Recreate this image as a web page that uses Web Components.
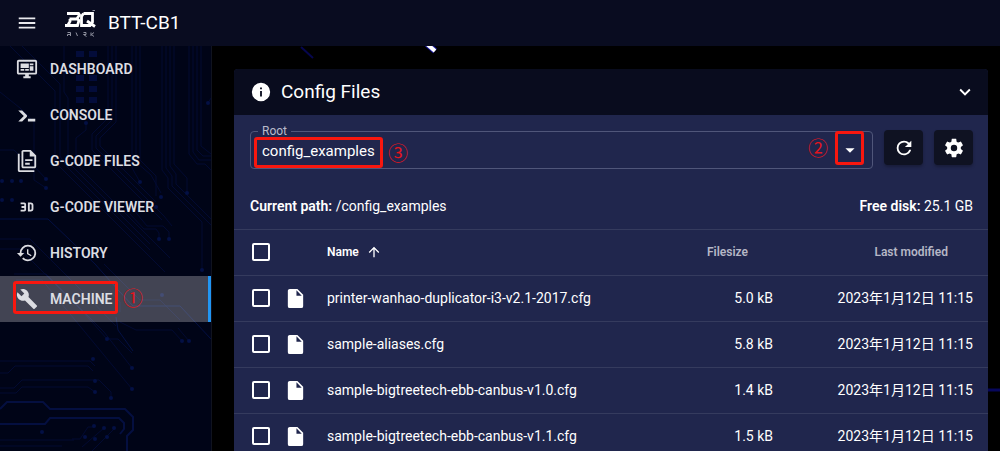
<!DOCTYPE html>
<html lang="en">
<head>
<meta charset="utf-8">
<meta name="viewport" content="width=device-width, initial-scale=1">
<title>BTT-CB1</title>
<style>
html, body { margin: 0; background: #000; }
body { font-family: Roboto, "Noto Sans CJK SC", sans-serif; font-size: 14px; line-height: 20px; color: #fff; overflow: hidden; }
</style>
</head>
<body>
<machine-app></machine-app>
<script>
const ICONS = {
  menu: 'M3,6H21V8H3V6M3,11H21V13H3V11M3,16H21V18H3V16Z',
  dashboard: 'M21,16V4H3V16H21M21,2A2,2 0 0,1 23,4V16A2,2 0 0,1 21,18H14V20H16V22H8V20H10V18H3C1.89,18 1,17.1 1,16V4C1,2.89 1.89,2 3,2H21M5,6H14V11H5V6M15,6H19V8H15V6M19,9V14H15V9H19M5,12H9V14H5V12M10,12H14V14H10V12Z',
  console: 'M13,19V16H21V19H13M8.5,13L2.47,7H6.71L11.67,11.95C12.25,12.54 12.25,13.5 11.67,14.07L6.74,19H2.5L8.5,13Z',
  files: 'M16 0H8C6.9 0 6 .9 6 2V18C6 19.1 6.9 20 8 20H20C21.1 20 22 19.1 22 18V6L16 0M20 18H8V2H15V7H20V18M4 4V22H20V24H4C2.9 24 2 23.1 2 22V4H4M10 10V12H18V10H10M10 14V16H15V14H10Z',
  viewer: 'M5,7H9A2,2 0 0,1 11,9V15A2,2 0 0,1 9,17H5V15H9V13H6V11H9V9H5V7M13,7H16A3,3 0 0,1 19,10V14A3,3 0 0,1 16,17H13V7M16,15A1,1 0 0,0 17,14V10A1,1 0 0,0 16,9H15V15H16Z',
  history: 'M13.5,8H12V13L16.28,15.54L17,14.33L13.5,12.25V8M13,3A9,9 0 0,0 4,12H1L4.96,16.03L9,12H6A7,7 0 0,1 13,5A7,7 0 0,1 20,12A7,7 0 0,1 13,19C11.07,19 9.32,18.21 8.06,16.94L6.64,18.36C8.27,20 10.5,21 13,21A9,9 0 0,0 22,12A9,9 0 0,0 13,3',
  wrench: 'M22.7,19L13.6,9.9C14.5,7.6 14,4.9 12.1,3C10.1,1 7.1,0.6 4.7,1.7L9,6L6,9L1.6,4.7C0.4,7.1 0.9,10.1 2.9,12.1C4.8,14 7.5,14.5 9.8,13.6L18.9,22.7C19.3,23.1 19.9,23.1 20.3,22.7L22.6,20.4C23.1,20 23.1,19.3 22.7,19Z',
  info: 'M13,9H11V7H13M13,17H11V11H13M12,2A10,10 0 0,0 2,12A10,10 0 0,0 12,22A10,10 0 0,0 22,12A10,10 0 0,0 12,2Z',
  chevron: 'M7.41,8.58L12,13.17L16.59,8.58L18,10L12,16L6,10L7.41,8.58Z',
  refresh: 'M17.65,6.35C16.2,4.9 14.21,4 12,4A8,8 0 0,0 4,12A8,8 0 0,0 12,20C15.73,20 18.84,17.45 19.73,14H17.65C16.83,16.33 14.61,18 12,18A6,6 0 0,1 6,12A6,6 0 0,1 12,6C13.66,6 15.14,6.69 16.22,7.78L13,11H20V4L17.65,6.35Z',
  cog: 'M12,15.5A3.5,3.5 0 0,1 8.5,12A3.5,3.5 0 0,1 12,8.5A3.5,3.5 0 0,1 15.5,12A3.5,3.5 0 0,1 12,15.5M19.43,12.97C19.47,12.65 19.5,12.33 19.5,12C19.5,11.67 19.47,11.34 19.43,11L21.54,9.37C21.73,9.22 21.78,8.95 21.66,8.73L19.66,5.27C19.54,5.05 19.27,4.96 19.05,5.05L16.56,6.05C16.04,5.66 15.5,5.32 14.87,5.07L14.5,2.42C14.46,2.18 14.25,2 14,2H10C9.75,2 9.54,2.18 9.5,2.42L9.13,5.07C8.5,5.32 7.96,5.66 7.44,6.05L4.95,5.05C4.73,4.96 4.46,5.05 4.34,5.27L2.34,8.73C2.21,8.95 2.27,9.22 2.46,9.37L4.57,11C4.53,11.34 4.5,11.67 4.5,12C4.5,12.33 4.53,12.65 4.57,12.97L2.46,14.63C2.27,14.78 2.21,15.05 2.34,15.27L4.34,18.73C4.46,18.95 4.73,19.03 4.95,18.95L7.44,17.94C7.96,18.34 8.5,18.68 9.13,18.93L9.5,21.58C9.54,21.82 9.75,22 10,22H14C14.25,22 14.46,21.82 14.5,21.58L14.87,18.93C15.5,18.67 16.04,18.34 16.56,17.94L19.05,18.95C19.27,19.03 19.54,18.95 19.66,18.73L21.66,15.27C21.78,15.05 21.73,14.78 21.54,14.63L19.43,12.97Z',
  file: 'M13,9V3.5L18.5,9M6,2C4.89,2 4,2.89 4,4V20A2,2 0 0,0 6,22H18A2,2 0 0,0 20,20V8L14,2H6Z',
  up: 'M13,20H11V8L5.5,13.5L4.08,12.08L12,4.16L19.92,12.08L18.5,13.5L13,8V20Z',
  caret: 'M7,10L12,15L17,10H7Z'
};

function define(name, render) {
  customElements.define(name, class extends HTMLElement {
    constructor() { super(); this.attachShadow({ mode: 'open' }); }
    connectedCallback() { this.shadowRoot.innerHTML = render(this); }
  });
}

define('mdi-icon', el => `
<style>
:host { display: block; flex: none; width: var(--icon-size, 20px); height: var(--icon-size, 20px); }
svg { display: block; width: 100%; height: 100%; fill: currentColor; }
</style>
<svg viewBox="0 0 24 24" aria-hidden="true"><path d="${ICONS[el.getAttribute('name')]}"/></svg>`);

/* Red outline laid over a control, with its numbered step beside it. */
define('step-mark', el => `
<style>
:host { position: absolute; box-sizing: border-box; border: 3px solid #f8170f; border-radius: 3px; pointer-events: none; color: #e3151d; }
span { position: absolute; top: 50%; left: calc(100% + 8px); margin-top: -14px; font: 20px/28px "Noto Sans CJK SC", sans-serif; }
:host([side="left"]) span { left: auto; right: calc(100% + 10px); }
</style><span>${el.getAttribute('step')}</span>`);

define('brand-logo', () => `
<style>:host { display: block; flex: none; width: 32px; height: 28px; } svg { display: block; }</style>
<svg width="32" height="28" viewBox="0 0 32 28" fill="none" stroke="#fff" aria-label="BIQU" role="img">
  <path d="M2 4.500H13.500L14.500 6L12 9.500L14 11.500L12.500 16.500H0M4.500 10H12M3 16L5 12.500V10" stroke-width="2.800"/>
  <path d="M18.500 4.500H27.500V13L25 16.500H16.500V7.500L18.500 4.500M22 12L30 17.500" stroke-width="2.800"/>
  <path d="M27.500 1.500H30" stroke="#8c8e9c"/>
  <path d="M2.500 23.500H5.500V27M2.500 27V25.500H5.500M11 23.500L12.500 27M18.500 23.500H21V25.500H18.500L21.500 27.500M26 23.500V27M29 23.500L26.500 25.500L29 27.500" stroke="#9092a0"/>
</svg>`);

define('top-bar', () => `
<style>
:host { display: flex; align-items: center; height: 46px; padding: 0 16px; background: #090c20; }
button { display: block; padding: 0; border: 0; background: none; color: #e9e9ed; --icon-size: 22px; }
brand-logo { margin: 0 11px 0 27px; }
h1 { margin: 0; font-size: 19px; line-height: 24px; font-weight: 400; }
</style>
<button aria-label="Toggle menu"><mdi-icon name="menu"></mdi-icon></button>
<brand-logo></brand-logo><h1>BTT-CB1</h1>`);

define('nav-item', el => `
<style>
:host { display: block; position: relative; }
a { display: flex; align-items: center; gap: 12px; height: 46px; box-sizing: border-box; padding: 0 16px; color: #dcdde2; text-decoration: none; font-weight: 600; --icon-size: 22px; }
:host([active]) a { background: rgba(255,255,255,.26); border-right: 3px solid #2196f3; }
step-mark { left: 13px; top: 5px; width: 105px; height: 33px; }
</style>
<a href="#${el.getAttribute('icon')}"><mdi-icon name="${el.getAttribute('icon')}"></mdi-icon><slot></slot></a>
${el.hasAttribute('active') ? '<step-mark step="①"></step-mark>' : ''}`);

define('circuit-art', () => {
  const dot = (x, y) => `<circle cx="${x}" cy="${y}" r="2"/>`;
  const dots = [[46,133],[46,142],[140,136],[161,151],[187,147],[156,161],[208,57],[159,193],[169,193],[202,224],[86,77],[162,249],[107,293],[182,295],[189,295],[93,313],[132,322],[95,335],[95,346],[132,343],[111,352],[42,386],[94,380],[104,382],[114,382],[85,391],[95,393],[107,391],[2,135],[12,135],[21,135],[2,154],[12,154]];
  const pads = [5,29,40,51].map(y => `<rect x="76" y="${y}" width="8" height="6"/><rect x="89" y="${y}" width="8" height="6"/>`).join('');
  return `
<style>:host { display: block; } svg { display: block; }</style>
<svg width="211" height="405" viewBox="0 0 211 405" fill="none" stroke="#020a32" stroke-width="1" aria-hidden="true">
<g fill="#030c3a" stroke="none">${pads}</g>
<path d="M0 46L20 62L34 76V120L46 133M10 0L55 45V116L120 181L165 226M22 0L60 38V110L68 122L150 204M0 104H14L34 124V134L46 142"/>
<path d="M64 0V46L68 52V116L150 198M86 77V84L76 92V118L170 212M108 0V72L92 88V104L162 174M112 0V74L96 90V102L164 170L172 180"/>
<path d="M116 0V76L100 92V100L156 156M132 0V122L140 136M136 0V116L151 129L161 147M140 0V114L156 130V150"/>
<path d="M162 0V124L168 132V142L202 176V224M166 0V122L172 130V140L211 179M170 0V120L176 128V138L211 173M174 0V118L187 132V147M189 0V108L197 118H205L211 124M193 0V106L199 114H211M197 0V104L203 110H211M201 0V100L211 108M208 57L211 52"/>
<path d="M133 163L147 180H163L169 186V193M130 168L144 183H156L159 187V193"/>
<path d="M0 193H30L80 243L116 280M0 203H20L84 267L107 293M14 228H46L104 286L132 322M16 234H42L132 343M106 293H118L132 307M110 245L120 256V266M104 218L140 254H160L180 274M120 276L136 284H172L182 295M178 282L189 295"/>
<path d="M0 315H90L95 320M0 327H8L15 320H88L93 325M0 342H14L22 334H99L111 346V352M0 347H16L22 341H88L95 346"/>
<path d="M48 173L95 218L119 245L133 260H180L211 293M116 271L118 284L133 305M0 173H48" stroke="#031044"/>
<path d="M0 363L7 356H43L50 363H125L133 371V384L127 390V405M0 378H45L50 372H119L124 377V383L120 388" stroke="#040f40" stroke-width="2"/>
<path d="M72 393H80L88 381H94M82 401L104 382M92 405L115 382M0 394H74M0 400H62"/>
<g fill="#031044" stroke="none">${dots.map(d => dot(...d)).join('')}</g>
</svg>`;
});

define('side-nav', () => `
<style>
:host { display: block; position: relative; overflow: hidden; background: #000417; border-right: 1px solid #10131f; }
circuit-art { position: absolute; left: 0; top: 0; }
nav { position: relative; }
</style>
<circuit-art></circuit-art>
<nav>
<nav-item icon="dashboard">DASHBOARD</nav-item>
<nav-item icon="console">CONSOLE</nav-item>
<nav-item icon="files">G-CODE FILES</nav-item>
<nav-item icon="viewer">G-CODE VIEWER</nav-item>
<nav-item icon="history">HISTORY</nav-item>
<nav-item icon="wrench" active>MACHINE</nav-item>
</nav>`);

define('root-select', () => `
<style>
:host { display: block; position: relative; flex: 1; }
fieldset { margin: 0; padding: 0; min-width: 0; height: 46px; box-sizing: border-box; border: 1px solid #50567a; border-radius: 4px; }
legend { margin-left: 7px; padding: 0 4px; font-size: 12px; line-height: 16px; color: #b9bbca; }
select { display: block; width: 100%; height: 24px; padding: 0 44px 0 11px; border: 0; outline: 0; appearance: none; background: none; color: #fff; font: 15px/24px Roboto, sans-serif; }
mdi-icon { position: absolute; right: 12px; top: 16px; pointer-events: none; --icon-size: 22px; }
.value { left: 4px; top: 14px; width: 129px; height: 31px; }
.arrow { right: 9px; top: 8px; width: 29px; height: 34px; }
</style>
<fieldset><legend><label for="root">Root</label></legend>
<select id="root"><option>config_examples</option><option>config</option></select></fieldset>
<mdi-icon name="caret"></mdi-icon>
<step-mark class="value" step="③"></step-mark>
<step-mark class="arrow" side="left" step="②"></step-mark>`);

define('icon-button', el => `
<style>
:host { display: block; flex: none; padding-top: 3px; }
button { display: grid; place-items: center; width: 39px; height: 35px; padding: 0; border: 0; border-radius: 4px; background: #0f1222; color: #fff; box-shadow: 0 2px 3px rgba(0,0,0,.25); --icon-size: 22px; }
</style><button aria-label="${el.getAttribute('label')}"><mdi-icon name="${el.getAttribute('icon')}"></mdi-icon></button>`);

const FILES = [
  ['printer-wanhao-duplicator-i3-v2.1-2017.cfg', '5.0 kB'],
  ['sample-aliases.cfg', '5.8 kB'],
  ['sample-bigtreetech-ebb-canbus-v1.0.cfg', '1.4 kB'],
  ['sample-bigtreetech-ebb-canbus-v1.1.cfg', '1.5 kB']
];

define('file-table', () => `
<style>
:host { display: block; }
table { width: 100%; border-collapse: separate; border-spacing: 0; table-layout: fixed; }
th, td { height: 46px; box-sizing: border-box; padding: 0 15px 1px 0; border-top: 1px solid #353b5e; text-align: right; white-space: nowrap; }
th { font-size: 12px; font-weight: 600; color: #b5b7c6; padding-right: 40px; }
.check { width: 54px; padding: 0 0 2px 18px; text-align: left; }
.icon { width: 39px; padding: 0; }
.name { padding: 0 0 1px; text-align: left; }
th.name { color: #fff; }
.size { width: 100px; }
.date { width: 200px; }
.sort { display: flex; align-items: center; gap: 7px; --icon-size: 16px; }
td mdi-icon { --icon-size: 23px; margin-left: -4px; }
input { display: block; appearance: none; box-sizing: border-box; width: 18px; height: 18px; margin: 0; border: 2px solid #fff; border-radius: 2px; }
input:checked { background: #2196f3; }
</style>
<table>
<thead><tr><th class="check"><input type="checkbox" aria-label="Select all"></th><th class="icon"></th>
<th class="name" aria-sort="ascending"><span class="sort">Name<mdi-icon name="up"></mdi-icon></span></th><th class="size">Filesize</th><th class="date">Last modified</th></tr></thead>
<tbody>${FILES.map(([n, s]) => `<tr><td class="check"><input type="checkbox" aria-label="Select ${n}"></td><td class="icon"><mdi-icon name="file"></mdi-icon></td><td class="name">${n}</td><td class="size">${s}</td><td class="date">2023年1月12日 11:15</td></tr>`).join('')}</tbody>
</table>`);

define('config-panel', () => `
<style>
:host { display: block; background: #20264d; border-radius: 4px 4px 0 0; overflow: hidden; }
header { display: flex; align-items: center; gap: 9px; height: 46px; padding: 0 12px 0 16px; background: #090c1e; --icon-size: 22px; }
h2 { flex: 1; margin: 0; font-size: 19px; line-height: 24px; font-weight: 400; }
header button { padding: 0; border: 0; background: none; color: #fff; }
.tools { display: flex; align-items: center; gap: 11px; padding: 8px 15px 0 16px; }
.path { display: flex; justify-content: space-between; padding: 27px 15px 13px 16px; }
b { font-weight: 600; }
</style>
<header><mdi-icon name="info"></mdi-icon><h2>Config Files</h2><button aria-label="Collapse"><mdi-icon name="chevron"></mdi-icon></button></header>
<div class="tools"><root-select></root-select><icon-button icon="refresh" label="Refresh"></icon-button><icon-button icon="cog" label="Settings"></icon-button></div>
<div class="path"><span><b>Current path:</b> /config_examples</span><span><b>Free disk:</b> 25.1 GB</span></div>
<file-table></file-table>`);

define('machine-app', () => `
<style>
:host { display: grid; grid-template: auto minmax(0, 1fr) / 212px minmax(0, 1fr); height: 100vh; }
top-bar { grid-column: 1 / -1; }
main { position: relative; overflow: hidden auto; scrollbar-width: none; padding: 23px 12px 0 22px; background: #000; }
config-panel { position: relative; }
.backdrop { position: absolute; left: 0; top: 0; width: 100%; height: 405px; }
</style>
<top-bar></top-bar>
<side-nav></side-nav>
<main>
<svg class="backdrop" fill="none" aria-hidden="true">
<path d="M89 1L101 12" stroke="#06064e" stroke-width="2"/>
<path d="M215 -2L223 5" stroke="#1717a0" stroke-width="6"/><path d="M215 -2L223 5" stroke="#fff" stroke-width="4"/>
<path d="M770 344H800" stroke="#07075c" stroke-width="3"/>
</svg>
<config-panel></config-panel>
</main>`);
</script>
</body>
</html>
